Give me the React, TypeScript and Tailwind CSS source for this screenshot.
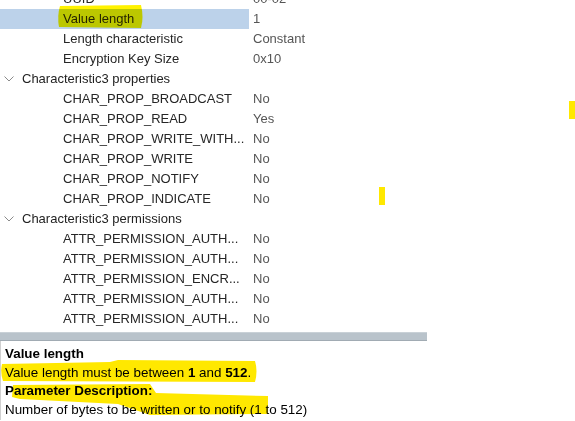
import React from "react";

type Row = { kind: "child" | "cat"; label: string; value?: string; sel?: boolean };

const rows: Row[] = [
  { kind: "child", label: "UUID", value: "00-02" },
  { kind: "child", label: "Value length", value: "1", sel: true },
  { kind: "child", label: "Length characteristic", value: "Constant" },
  { kind: "child", label: "Encryption Key Size", value: "0x10" },
  { kind: "cat", label: "Characteristic3 properties" },
  { kind: "child", label: "CHAR_PROP_BROADCAST", value: "No" },
  { kind: "child", label: "CHAR_PROP_READ", value: "Yes" },
  { kind: "child", label: "CHAR_PROP_WRITE_WITH...", value: "No" },
  { kind: "child", label: "CHAR_PROP_WRITE", value: "No" },
  { kind: "child", label: "CHAR_PROP_NOTIFY", value: "No" },
  { kind: "child", label: "CHAR_PROP_INDICATE", value: "No" },
  { kind: "cat", label: "Characteristic3 permissions" },
  { kind: "child", label: "ATTR_PERMISSION_AUTH...", value: "No" },
  { kind: "child", label: "ATTR_PERMISSION_AUTH...", value: "No" },
  { kind: "child", label: "ATTR_PERMISSION_ENCR...", value: "No" },
  { kind: "child", label: "ATTR_PERMISSION_AUTH...", value: "No" },
  { kind: "child", label: "ATTR_PERMISSION_AUTH...", value: "No" },
];

function Chevron() {
  return (
    <svg width="10" height="6" viewBox="0 0 10 6" className="ml-[4px] mr-[8px]">
      <polyline points="0.5,0.5 5,5 9.5,0.5" fill="none" stroke="#8a8a8a" strokeWidth="1" />
    </svg>
  );
}

export default function App() {
  return (
    <div
      className="relative w-[575px] h-[421px] overflow-hidden bg-white text-[13px]"
      style={{ fontFamily: '"Liberation Sans", Arial, sans-serif' }}
    >
      <div className="w-[427px] -mt-[11px]">
        {rows.map((r, i) => (
          <div key={i} className="flex h-[20px] items-center">
            {r.kind === "cat" ? (
              <div className="flex items-center text-[#222]">
                <Chevron />
                <span>{r.label}</span>
              </div>
            ) : (
              <>
                <div
                  className={`flex h-full w-[249px] items-center pl-[63px] text-[#262626] whitespace-nowrap ${
                    r.sel ? "bg-[#bcd2ea]" : ""
                  }`}
                >
                  {r.label}
                </div>
                <div className="pl-[4px] text-[#555]">{r.value}</div>
              </>
            )}
          </div>
        ))}
      </div>
      <div className="mt-[3px] w-[427px] h-[9px] bg-[#b9c3cb] border-t border-[#c9d1d7] border-b border-b-[#a1abb3]" />
      <div className="w-[427px] border-l border-[#d0d0d0] pl-[4px] pt-[4px] text-black text-[13.4px] leading-[18.7px]">
        <div className="font-bold">Value length</div>
        <div>
          Value length must be between <b>1</b> and <b>512</b>.
        </div>
        <div className="font-bold">Parameter Description:</div>
        <div>Number of bytes to be written or to notify (1 to 512)</div>
      </div>
      <svg
        className="pointer-events-none absolute left-0 top-0 mix-blend-multiply"
        width="575"
        height="421"
        viewBox="0 0 575 421"
      >
        <path d="M60 6 Q57 16 59 27 L141 28 Q144 17 141 5 Z" fill="#fff200" />
        <path d="M2 364 L110 362 L118 360 L255 361 Q258 371 255 382 L3 381 Q0 372 2 364 Z" fill="#ffe800" />
        <path d="M13 385 L150 384 L156 393 L268 396 L268 414 L150 415 L118 404 L20 399 L12 397 Z" fill="#ffe800" />
        <rect x="569" y="101" width="6" height="18" fill="#ffe800" />
        <rect x="379" y="187" width="6" height="18" fill="#ffe800" />
      </svg>
    </div>
  );
}
